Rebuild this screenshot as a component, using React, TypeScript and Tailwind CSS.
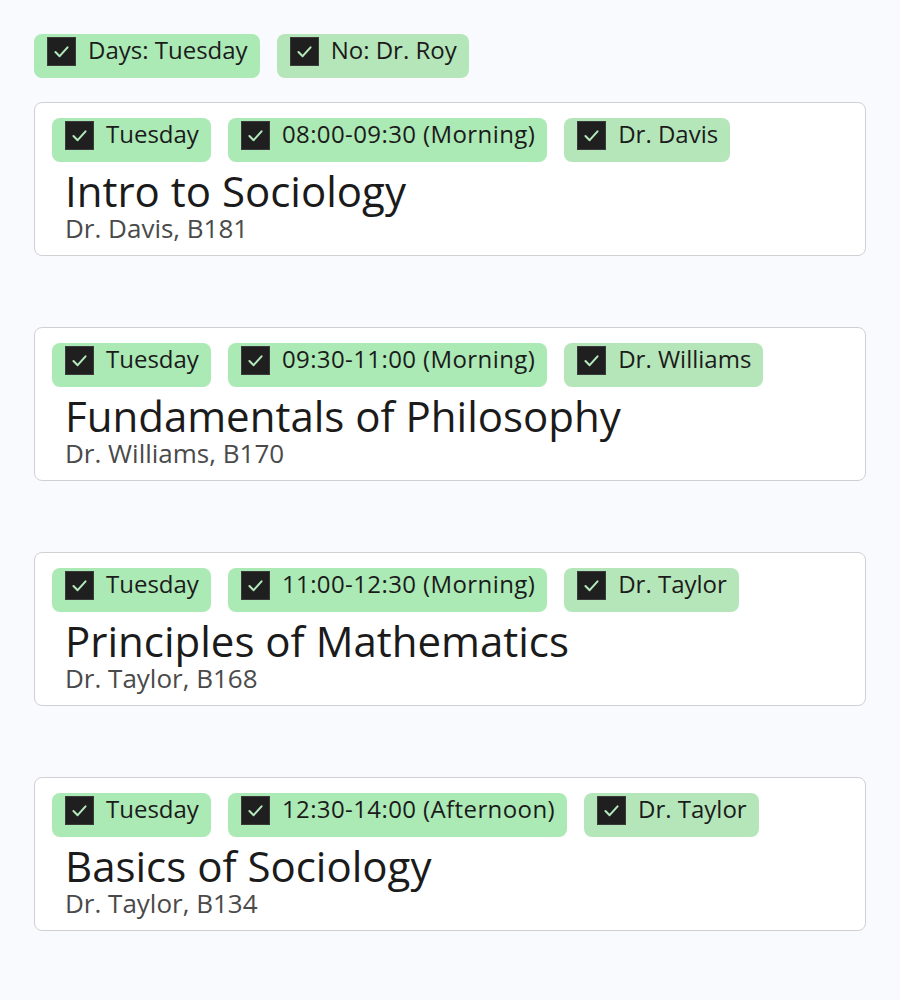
import React from "react";

const font = { fontFamily: '"Open Sans", "Noto Sans", sans-serif' };

function Check() {
  return (
    <span className="flex h-[29px] w-[29px] shrink-0 items-center justify-center bg-[#1f1f1f] border border-[#3a3a3a]">
      <svg width="29" height="29" viewBox="0 0 29 29" fill="none">
        <path d="M8 15 L12.5 19.5 L21 10" stroke="#b2e8ba" strokeWidth="2.2" strokeLinecap="round" strokeLinejoin="round" />
      </svg>
    </span>
  );
}

function Chip({ label, alt, wide }: { label: string; alt?: boolean; wide?: boolean }) {
  return (
    <div className={`flex h-[44px] items-start gap-[12px] rounded-[8px] pl-[13px] pr-[12px] pt-[3px] ${alt ? "bg-[#b5e6b9]" : "bg-[#abe9b5]"}`}>
      <Check />
      <span className={`text-[24px] leading-[26px] text-[#1b1b1b] whitespace-nowrap ${wide ? "tracking-[0.4px]" : ""}`}>{label}</span>
    </div>
  );
}

const courses = [
  { time: "08:00-09:30 (Morning)", prof: "Dr. Davis", title: "Intro to Sociology", sub: "Dr. Davis, B181" },
  { time: "09:30-11:00 (Morning)", prof: "Dr. Williams", title: "Fundamentals of Philosophy", sub: "Dr. Williams, B170" },
  { time: "11:00-12:30 (Morning)", prof: "Dr. Taylor", title: "Principles of Mathematics", sub: "Dr. Taylor, B168" },
  { time: "12:30-14:00 (Afternoon)", prof: "Dr. Taylor", title: "Basics of Sociology", sub: "Dr. Taylor, B134" },
];

export default function App() {
  return (
    <div className="min-h-[1000px] w-[900px] bg-[#f9fafe] px-[34px] pt-[34px]" style={font}>
      <div className="flex gap-[17px]">
        <Chip label="Days: Tuesday" />
        <Chip label="No: Dr. Roy" alt />
      </div>
      <div className="mt-[24px] flex flex-col gap-[71px]">
        {courses.map((c) => (
          <div key={c.title} className="h-[154px] overflow-hidden rounded-[8px] border border-[#d0d0d4] bg-white pl-[17px] pt-[15px]">
            <div className="flex gap-[17px]">
              <Chip label="Tuesday" />
              <Chip label={c.time} wide />
              <Chip label={c.prof} alt />
            </div>
            <div className="pl-[13px] pt-[3px]">
              <div className="text-[42px] leading-[52px] text-[#1b1b1b] whitespace-nowrap">{c.title}</div>
              <div className="text-[26px] leading-[22px] text-[#4a4a4a] whitespace-nowrap">{c.sub}</div>
            </div>
          </div>
        ))}
      </div>
    </div>
  );
}
